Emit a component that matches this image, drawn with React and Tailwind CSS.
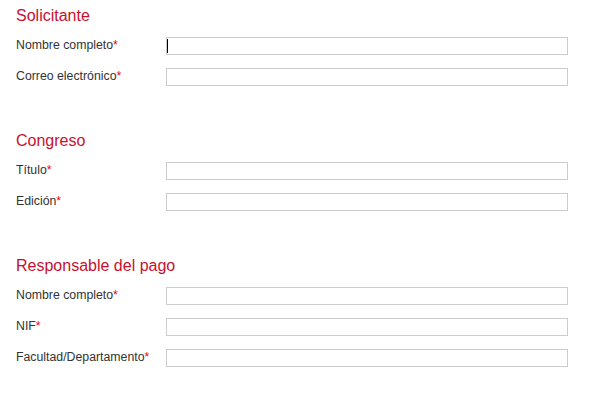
import React from 'react';

const SECTIONS = [
  { title: 'Solicitante', fields: ['Nombre completo', 'Correo electrónico'] },
  { title: 'Congreso', fields: ['Título', 'Edición'] },
  { title: 'Responsable del pago', fields: ['Nombre completo', 'NIF', 'Facultad/Departamento'] },
];

function Field({ label, caret }) {
  return (
    <div className="flex items-start h-[18px]">
      <label className="w-[150px] shrink-0 text-[12.3px] leading-[16px] text-[#333333]">
        {label}<span className="text-[#e8001c]">*</span>
      </label>
      <div className="relative w-[402px] h-[18px]">
        <input type="text" className="block w-full h-full border border-[#cccccc] bg-white outline-none px-[2px] text-[12px]" />
        {caret && <span className="absolute left-[1px] top-[2px] bottom-[2px] w-[1px] bg-black" />}
      </div>
    </div>
  );
}

export default function App() {
  return (
    <div className="min-h-[405px] bg-white pl-4 pt-[6px] font-['Liberation_Sans',Arial,sans-serif]">
      {SECTIONS.map((s, i) => (
        <section key={s.title} className={i > 0 ? 'mt-[45px]' : ''}>
          <h2 className="text-[16px] leading-[20px] font-normal text-[#c8102e] mb-[11px]">{s.title}</h2>
          <div className="flex flex-col gap-[13px]">
            {s.fields.map((f, j) => (
              <Field key={f} label={f} caret={i === 0 && j === 0} />
            ))}
          </div>
        </section>
      ))}
    </div>
  );
}
